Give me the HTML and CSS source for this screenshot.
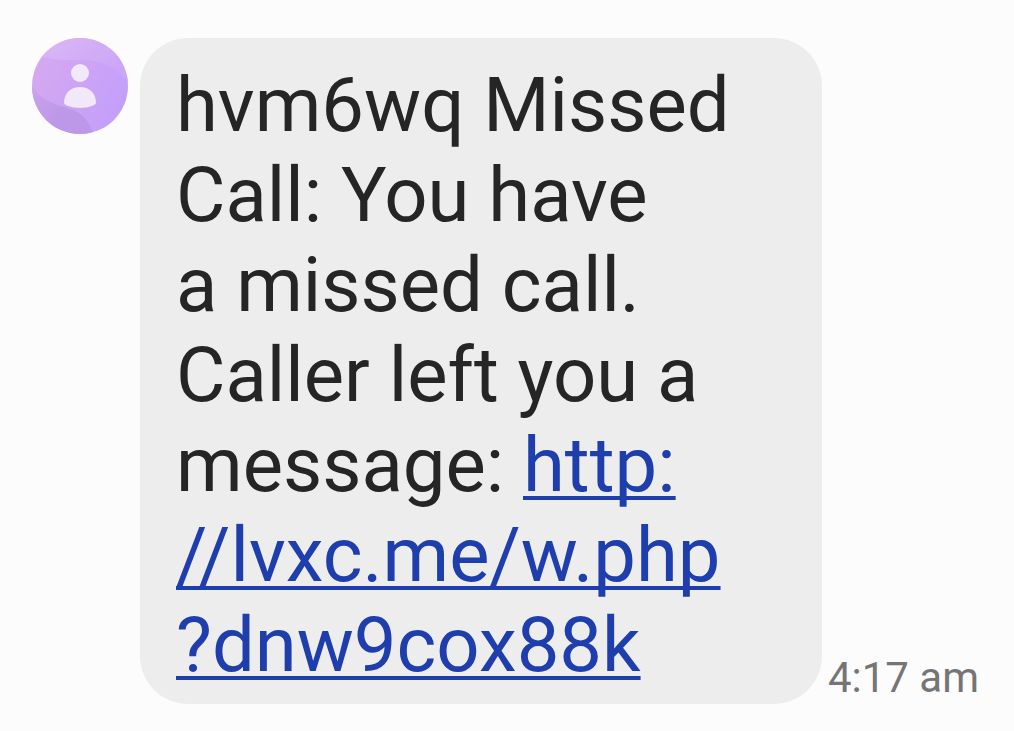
FILE: index.html
```html
<!DOCTYPE html>
<html lang="en">
<head>
    <meta charset="UTF-8">
    <meta name="viewport" content="width=device-width, initial-scale=1.0">
    <title>Messages</title>
    <link rel="stylesheet" href="styles.css">
</head>
<body>

<main class="message">
    <svg class="avatar" viewBox="0 0 96 96" role="img" aria-label="Unknown contact">
        <defs>
            <linearGradient id="avatar-bg" x1="0" y1="0.2" x2="1" y2="0.8">
                <stop offset="0.1" stop-color="#d4a8f1"/>
                <stop offset="0.9" stop-color="#c49ffa"/>
            </linearGradient>
            <linearGradient id="avatar-top" x1="0" y1="0" x2="1" y2="0.5">
                <stop offset="0.3" stop-color="#d8b3f6"/>
                <stop offset="1" stop-color="#cba6f6"/>
            </linearGradient>
            <linearGradient id="avatar-wave" x1="0" y1="0" x2="1" y2="0.6">
                <stop offset="0" stop-color="#cba3ec"/>
                <stop offset="0.6" stop-color="#bd98e8"/>
            </linearGradient>
            <clipPath id="avatar-clip"><circle cx="48" cy="48" r="48"/></clipPath>
        </defs>
        <g clip-path="url(#avatar-clip)">
            <rect width="96" height="96" fill="url(#avatar-bg)"/>
            <path d="M0 14C18 23 30 22 48 22C72 22 84 30 96 44V0H0Z" fill="url(#avatar-top)"/>
            <path d="M0 48C12 66 26 66 41 72C53 77 57 84 62 96H0Z" fill="url(#avatar-wave)"/>
        </g>
        <circle cx="48" cy="35" r="9" fill="#f1e8f9"/>
        <path d="M32 65C32 55 39 49 48 49S64 55 64 65C64 67 56 70 48 70S32 67 32 65Z" fill="#f1e8f9"/>
    </svg>

    <p class="bubble">
        hvm6wq Missed<br>
        Call: You have<br>
        a missed call.<br>
        Caller left you a<br>
        message: <a href="#">http:<br>//lvxc.me/w.php<br>?dnw9cox88k</a>
    </p>

    <time class="time" datetime="04:17">4:17 am</time>
</main>

</body>
</html>
```
FILE: styles.css
```css
body {
    font-family: Roboto, sans-serif;
    background: #fcfcfc;
    color: #252525;
    margin: 0;
}

.message {
    display: flex;
    align-items: flex-start;
    padding: 38px 35px 27px 32px;
}

.avatar {
    flex: none;
    width: 96px;
    height: 96px;
    margin-right: 12px;
}

.bubble {
    flex: 1;
    margin: 0;
    padding: 22px 36px 14px;
    background: #ededed;
    border-radius: 48px;
    font-size: 76px;
    line-height: 90px;
    white-space: nowrap;
}

.bubble a {
    color: #1e3eae;
    text-decoration-thickness: 4px;
    text-underline-offset: 5px;
    text-decoration-skip-ink: none;
}

.time {
    align-self: flex-end;
    margin-left: 6px;
    padding-bottom: 1px;
    color: #757575;
    font-size: 42px;
    line-height: 50px;
}
```
